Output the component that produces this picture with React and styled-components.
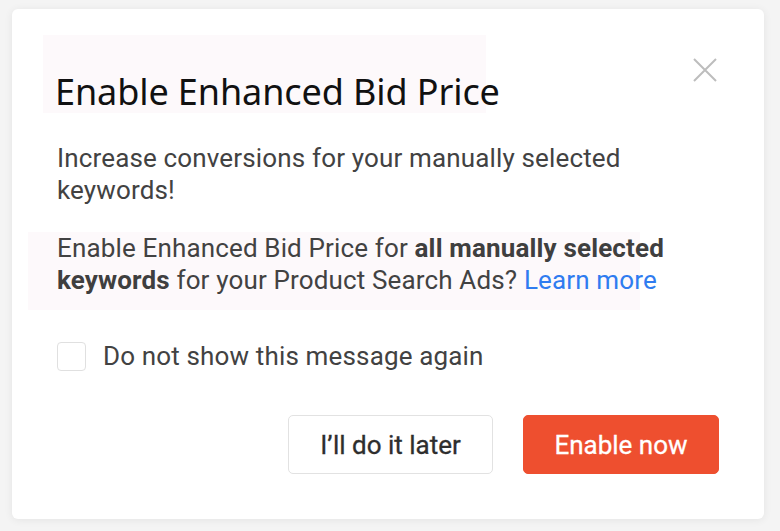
import styled, { createGlobalStyle } from 'styled-components'

const Global = createGlobalStyle`
    html, body {
        margin: 0;
        padding: 0;
        background: #f4f4f4;
    }
    * { box-sizing: border-box; }
`

const App = () => {
    return (
        <Page>
            <Global />
            <Card>
                <Close aria-label="Close">
                    <svg width="24" height="24" viewBox="0 0 24 24">
                        <path d="M1 1 L23 23 M23 1 L1 23" stroke="#bdbdbd" strokeWidth="2" fill="none" />
                    </svg>
                </Close>
                <TitleBox>
                    <Title>Enable Enhanced Bid Price</Title>
                </TitleBox>
                <Text>Increase conversions for your manually selected keywords!</Text>
                <Text $highlight $top={26}>
                    Enable Enhanced Bid Price for <b>all manually selected keywords</b> for your Product Search Ads?{' '}
                    <Link href="#">Learn more</Link>
                </Text>
                <CheckRow>
                    <Box />
                    <span>Do not show this message again</span>
                </CheckRow>
                <Actions>
                    <Button>I’ll do it later</Button>
                    <Button $primary>Enable now</Button>
                </Actions>
            </Card>
        </Page>
    )
}

const Page = styled.div`
    padding: 9px 16px 12px 12px;
    min-height: 531px;
`

const Card = styled.div`
    position: relative;
    width: 752px;
    height: 510px;
    background: #fff;
    border-radius: 6px;
    box-shadow: 0 1px 8px rgba(0, 0, 0, 0.07);
    padding: 26px 45px 45px 45px;
    display: flex;
    flex-direction: column;
`

const Close = styled.button`
    position: absolute;
    top: 49px;
    right: 47px;
    width: 24px;
    height: 24px;
    padding: 0;
    border: none;
    background: none;
    cursor: pointer;
    svg { display: block; }
`

const TitleBox = styled.div`
    margin-left: -14px;
    width: 443px;
    height: 78px;
    padding: 35px 12px 0;
    background: #fdf9fb;
`

const Title = styled.h1`
    margin: 0;
    font-family: "Noto Sans", "Open Sans", sans-serif;
    font-weight: 400;
    font-size: 36px;
    line-height: 44px;
    letter-spacing: -0.1px;
    color: #111;
    white-space: nowrap;
`

const Text = styled.p`
    position: relative;
    max-width: 630px;
    margin: ${p => p.$top || 29}px 0 0;
    font-family: Roboto, "Liberation Sans", sans-serif;
    font-size: 26px;
    line-height: 32px;
    letter-spacing: 0.15px;
    color: #424242;
    padding-bottom: ${p => (p.$highlight ? 14 : 0)}px;
    z-index: 0;
    b { font-weight: 700; color: #3f3f3f; }
    &::before {
        content: '';
        display: ${p => (p.$highlight ? 'block' : 'none')};
        position: absolute;
        left: -29px;
        top: 0;
        bottom: 0;
        width: 612px;
        background: #fdf9fb;
        z-index: -1;
    }
`

const Link = styled.a`
    color: #2f7cf0;
    text-decoration: none;
`

const CheckRow = styled.label`
    display: flex;
    align-items: center;
    gap: 17px;
    margin-top: 31px;
    font-family: Roboto, "Liberation Sans", sans-serif;
    font-size: 26px;
    letter-spacing: 0.15px;
    color: #424242;
    cursor: pointer;
`

const Box = styled.span`
    width: 29px;
    height: 29px;
    border: 1.5px solid #e0e0e0;
    border-radius: 4px;
    background: #fff;
`

const Actions = styled.div`
    display: flex;
    justify-content: flex-end;
    gap: 30px;
    margin-top: auto;
`

const Button = styled.button`
    height: 59px;
    width: ${p => (p.$primary ? 196 : 205)}px;
    padding: 0;
    border-radius: 5px;
    border: 1.5px solid ${p => (p.$primary ? '#ee4f2f' : '#e2e2e2')};
    background: ${p => (p.$primary ? '#ee4f2f' : '#fff')};
    color: ${p => (p.$primary ? '#fff' : '#2e2e2e')};
    font-family: Roboto, "Liberation Sans", sans-serif;
    font-weight: 400;
    font-size: 26px;
    -webkit-text-stroke: 0.3px currentColor;
    cursor: pointer;
`

export default App
